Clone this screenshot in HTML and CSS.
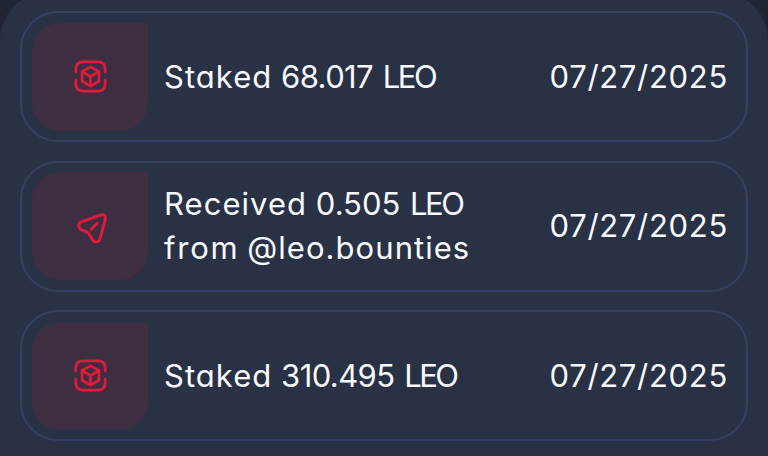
FILE: index.html
```html
<!DOCTYPE html>
<html lang="en">
<head>
<meta charset="utf-8">
<title>Activity</title>
<link rel="stylesheet" href="styles.css">
</head>
<body>
<svg class="symbols" aria-hidden="true">
  <symbol id="stake" viewBox="0 0 36 36">
    <path d="M2 13V10Q2 2 10 2H26Q34 2 34 10V13M2 22V26Q2 34 10 34H26Q34 34 34 26V22"/>
    <path d="M18 7.5 27.2 12.6V23.2L18 28.5 8.8 23.2V12.6ZM9.2 13 18 18 26.8 13M18 18V28"/>
  </symbol>
  <symbol id="send" viewBox="0 0 33 33">
    <path d="M6.5 12.2 26.8 5Q32.2 3.8 31.2 9.5L25.8 29.6Q22.5 34.5 18.9 30.2L14.3 22.8 6.5 19.3Q2.7 15.4 6.5 12.2ZM17.2 19.2 23.2 13.2"/>
  </symbol>
</svg>
<main class="panel">
  <article class="card">
    <div class="tile"><svg class="icon"><use href="#stake"/></svg></div>
    <p class="text"><span class="word">Staked</span> <span class="amount staked">68.017</span> <span class="unit">LEO</span></p>
    <time class="date">07/27/2025</time>
  </article>
  <article class="card">
    <div class="tile"><svg class="icon"><use href="#send"/></svg></div>
    <p class="text"><span class="word">Received</span> <span class="amount">0.505</span> <span class="unit">LEO</span><br><span class="from">from</span> <span class="account">@leo.bounties</span></p>
    <time class="date">07/27/2025</time>
  </article>
  <article class="card">
    <div class="tile"><svg class="icon"><use href="#stake"/></svg></div>
    <p class="text"><span class="word">Staked</span> <span class="amount staked">310.495</span> <span class="unit">LEO</span></p>
    <time class="date">07/27/2025</time>
  </article>
</main>
</body>
</html>
```
FILE: styles.css
```css
* { box-sizing: border-box; }
body {
  margin: 0;
  background: #1f2535;
  color: #f8faff;
  font: 400 31px/44px Inter, sans-serif;
  font-feature-settings: "cv11";
}
.symbols { position: absolute; width: 0; height: 0; }
.panel {
  display: flex;
  flex-direction: column;
  gap: 18.5px;
  height: 464px;
  margin-top: -8px;
  padding: 19px 20px 0;
  border-radius: 48px 48px 0 0;
  background: #293145;
}
.card {
  display: flex;
  flex: none;
  align-items: center;
  height: 131px;
  padding: 0 18px 0 10px;
  border: 2px solid #364060;
  border-radius: 38px;
}
.tile {
  display: grid;
  place-items: center;
  width: 116px;
  height: 108px;
  margin-right: 16px;
  border-radius: 28px 0 28px 28px;
  background: #3e2e42;
}
.icon {
  width: 33px;
  height: 33px;
  overflow: visible;
  fill: none;
  stroke: #e01a3b;
  stroke-width: 3;
  stroke-linecap: round;
  stroke-linejoin: round;
}
.text { margin: 0; white-space: nowrap; }
.word { letter-spacing: 1.05px; }
.staked { letter-spacing: -0.6px; }
.unit { letter-spacing: -2.5px; margin-left: 1px; }
.from { letter-spacing: 1.8px; }
.account { letter-spacing: 1.05px; margin-left: -1px; }
.date { margin-left: auto; letter-spacing: 0.7px; white-space: nowrap; }
```
